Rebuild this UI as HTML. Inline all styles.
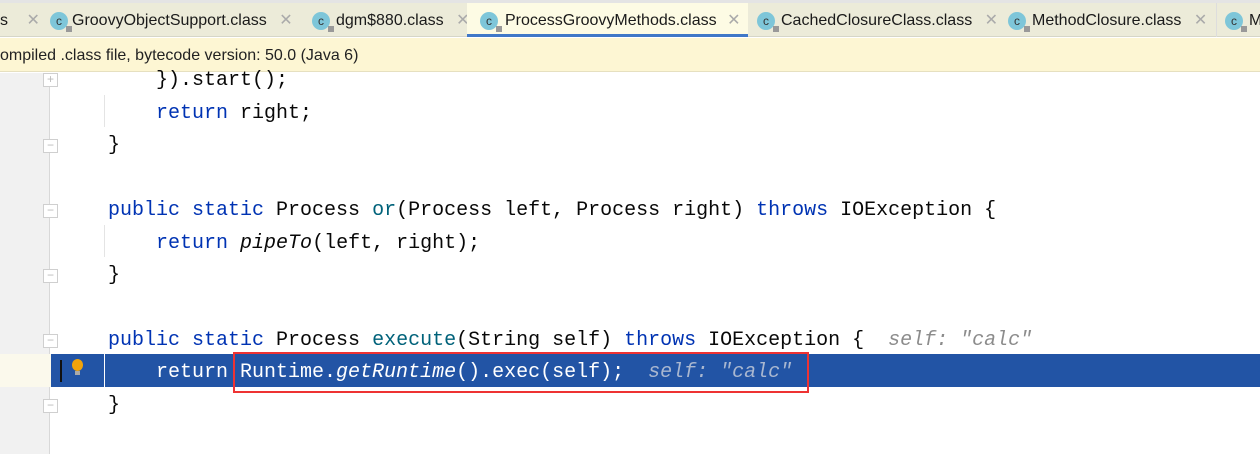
<!DOCTYPE html>
<html><head><meta charset="utf-8"><style>
*{margin:0;padding:0;box-sizing:border-box}
body{width:1260px;height:454px;overflow:hidden;background:#fff;position:relative;font-family:"Liberation Sans",sans-serif}
.top{position:absolute;left:0;top:0;width:1260px;height:3px;background:#e4e4e4}
.tabs{position:absolute;left:0;top:3px;width:1260px;height:34px;background:#ecebd9;border-bottom:1px solid #d6d6c8}
.tab{position:absolute;top:0;height:34px;font-size:16px;color:#1a1a1a;line-height:36px;white-space:nowrap}
.tab.active{background:#fdfbe4;border-bottom:3px solid #4078c8}
.ic{position:absolute;top:9px;width:18px;height:18px;border-radius:50%;background:#7ec6d9;color:#333;font-size:12px;line-height:18px;text-align:center}
.ic::after{content:"";position:absolute;right:-4px;bottom:-2px;width:6px;height:6px;background:#999}
.x{color:#aaa;font-size:16px}
.banner{position:absolute;left:0;top:38px;width:1260px;height:34px;background:#fdf6d3;font-size:16px;line-height:36px;color:#222;border-bottom:1px solid #e6e0c0}
.gut{position:absolute;left:0;top:73px;width:50px;height:381px;background:#f1f1f1;border-right:1px solid #d8d8d8}
.fold{position:absolute;left:43px;width:15px;height:14px;border:1px solid #cfcfcf;background:#fff;color:#bbb;font-size:12px;line-height:11px;text-align:center}
.code{position:absolute;left:108px;font-family:"Liberation Mono",monospace;font-size:20px;color:#080808;white-space:pre;line-height:32px}
.k{color:#0033b3}.m{color:#00627a}.i{font-style:italic}.h{color:#8c8c8c;font-style:italic}
.guide{position:absolute;left:104px;width:1px;background:#e4e4e4}
</style></head><body>
<div class="top"></div>
<div class="tabs">
 <div class="tab" style="left:0">s <span class="x" style="margin-left:14px">✕</span></div>
 <div class="tab" style="left:50px"><span class="ic" style="left:0">c</span><span style="margin-left:22px">GroovyObjectSupport.class</span> <span class="x" style="margin-left:8px">✕</span></div>
 <div class="tab" style="left:312px"><span class="ic" style="left:0">c</span><span style="margin-left:24px">dgm$880.class</span> <span class="x" style="margin-left:8px">✕</span></div>
 <div class="tab active" style="left:467px;width:281px"><span class="ic" style="left:13px">c</span><span style="margin-left:38px">ProcessGroovyMethods.class</span> <span class="x" style="margin-left:6px">✕</span></div>
 <div class="tab" style="left:757px"><span class="ic" style="left:0">c</span><span style="margin-left:24px">CachedClosureClass.class</span> <span class="x" style="margin-left:8px">✕</span></div>
 <div class="tab" style="left:1008px"><span class="ic" style="left:0">c</span><span style="margin-left:24px">MethodClosure.class</span> <span class="x" style="margin-left:8px">✕</span></div>
 <div class="tab" style="left:1216px;border-left:1px solid #ddd;padding-left:8px"><span class="ic" style="left:8px">c</span><span style="margin-left:24px">Me</span></div>
</div>
<div class="banner">ompiled .class file, bytecode version: 50.0 (Java 6)</div>
<div class="gut"></div>
<div style="position:absolute;left:0;top:354px;width:51px;height:33px;background:#fbf9ec"></div>
<div style="position:absolute;left:51px;top:354px;width:1209px;height:33px;background:#2254a5"></div>
<div style="position:absolute;left:60px;top:360px;width:2px;height:22px;background:#111"></div>
<div style="position:absolute;left:72px;top:359px;width:11px;height:12px;border-radius:50%;background:#f0a30a"></div>
<div style="position:absolute;left:75px;top:371px;width:5px;height:4px;background:#aaa"></div>
<div style="position:absolute;left:104px;top:354px;width:1px;height:33px;background:#fff"></div>
<div class="guide" style="top:95px;height:32px"></div>
<div class="guide" style="top:225px;height:32px"></div>
<div class="fold" style="top:73px">+</div>
<div class="fold" style="top:139px">−</div>
<div class="fold" style="top:204px">−</div>
<div class="fold" style="top:269px">−</div>
<div class="fold" style="top:334px">−</div>
<div class="fold" style="top:399px">−</div>
<div class="code" style="top:65px">    }).start();</div>
<div class="code" style="top:98px">    <span class="k">return</span> right;</div>
<div class="code" style="top:130px">}</div>
<div class="code" style="top:195px"><span class="k">public static</span> Process <span class="m">or</span>(Process left, Process right) <span class="k">throws</span> IOException {</div>
<div class="code" style="top:228px">    <span class="k">return</span> <span class="i">pipeTo</span>(left, right);</div>
<div class="code" style="top:260px">}</div>
<div class="code" style="top:325px"><span class="k">public static</span> Process <span class="m">execute</span>(String self) <span class="k">throws</span> IOException {  <span class="h">self: "calc"</span></div>
<div class="code" style="top:357px;color:#fff">    return Runtime.<span class="i">getRuntime</span>().exec(self);  <span class="i" style="color:#a9b7d0">self: "calc"</span></div>
<div class="code" style="top:390px">}</div>
<div style="position:absolute;left:233px;top:352px;width:576px;height:41px;border:2px solid #ee3333"></div>
</body></html>
